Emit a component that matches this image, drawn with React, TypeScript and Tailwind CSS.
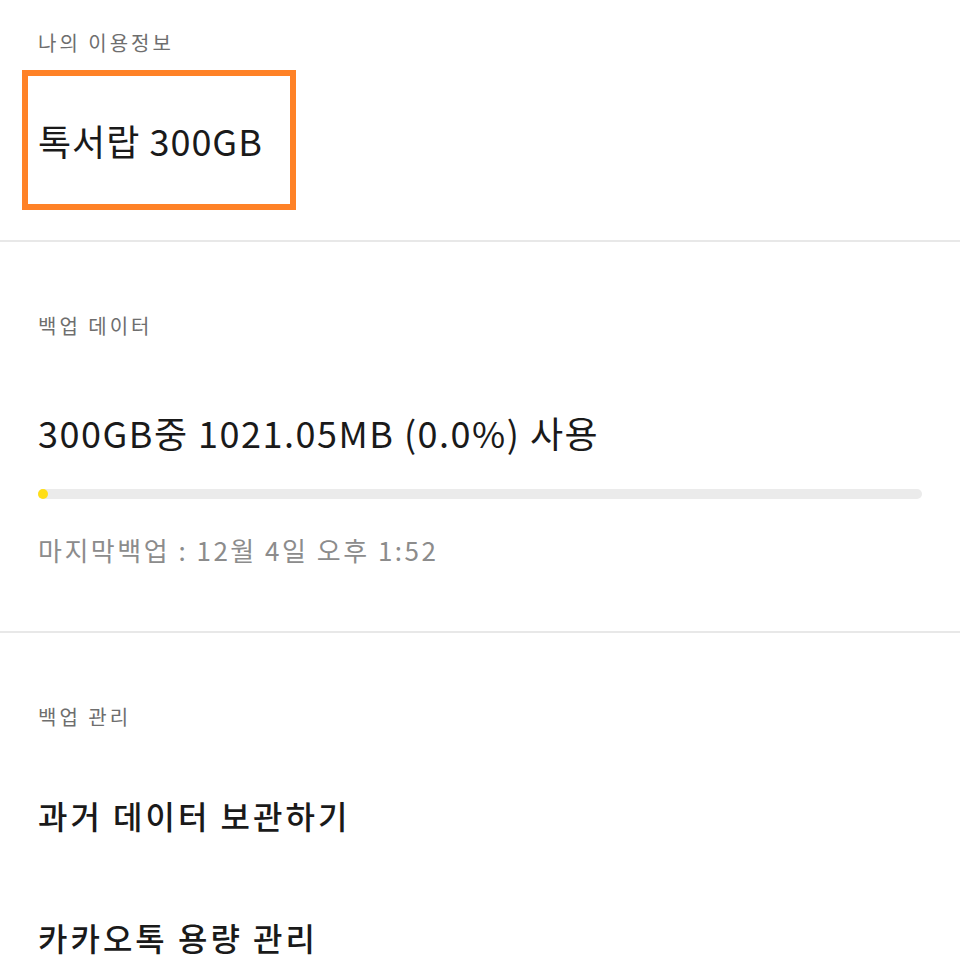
const font = { fontFamily: '"Noto Sans CJK KR", "Noto Sans", sans-serif' };

export default function App() {
  return (
    <div className="w-[960px] min-h-[960px] bg-white overflow-hidden" style={font}>
      {/* 나의 이용정보 */}
      <section className="pt-[29px] pb-[30px]">
        <p className="px-[38px] text-[20px] leading-[28px] tracking-[3px] text-[#6e6e6e]">나의 이용정보</p>
        <div className="ml-[22px] mt-[13px] w-[274px] h-[140px] border-[6px] border-[#ff8227] flex items-center pl-[10px]">
          <span className="text-[36px] leading-[48px] tracking-[1px] text-[#1a1a1a]">톡서랍 300GB</span>
        </div>
      </section>
      <div className="h-[2px] bg-[#e8e8e8]" />

      {/* 백업 데이터 */}
      <section className="pt-[70px] pb-[63px] px-[38px]">
        <p className="text-[20px] leading-[28px] tracking-[3px] text-[#6e6e6e]">백업 데이터</p>
        <p className="mt-[68px] text-[36px] leading-[48px] tracking-[1.5px] text-[#1a1a1a]">
          300GB중 1021.05MB (0.0%) 사용
        </p>
        <div className="mt-[33px] h-[10px] rounded-full bg-[#ebebeb] flex">
          <div className="w-[10px] h-[10px] rounded-full bg-[#ffde17]" />
        </div>
        <p className="mt-[33px] text-[26px] leading-[36px] tracking-[2.5px] text-[#8c8c8c]">
          마지막백업 : 12월 4일 오후 1:52
        </p>
      </section>
      <div className="h-[2px] bg-[#e8e8e8]" />

      {/* 백업 관리 */}
      <section className="pt-[70px] px-[38px]">
        <p className="text-[20px] leading-[28px] tracking-[3px] text-[#6e6e6e]">백업 관리</p>
        <div className="mt-[23px]">
          {["과거 데이터 보관하기", "카카오톡 용량 관리"].map((item) => (
            <div key={item} className="h-[122px] flex items-center">
              <span className="text-[32px] leading-[44px] font-medium text-[#1a1a1a] tracking-[3px]">
                {item}
              </span>
            </div>
          ))}
        </div>
      </section>
    </div>
  );
}
